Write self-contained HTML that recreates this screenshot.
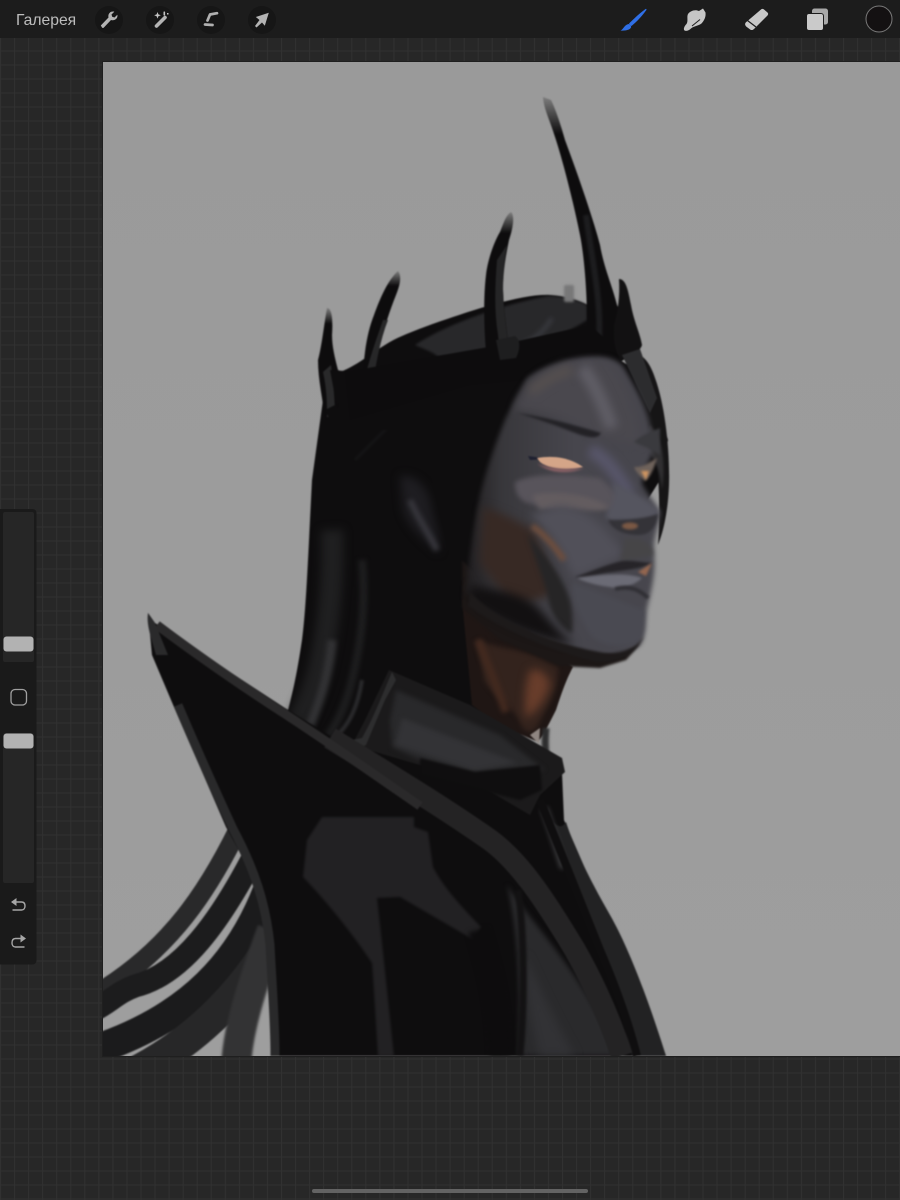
<!DOCTYPE html>
<html><head><meta charset="utf-8"><style>
html,body{margin:0;padding:0;background:#272727;width:900px;height:1200px;overflow:hidden}
svg{display:block}
</style></head><body>
<svg xmlns="http://www.w3.org/2000/svg" width="900" height="1200" viewBox="0 0 900 1200" color-interpolation-filters="sRGB">
<defs>
<pattern id="g" x="0" y="8.500" width="14.050" height="14" patternUnits="userSpaceOnUse">
<rect width="14.050" height="14" fill="#272727"/><rect x="0" y="0" width="14.050" height="1" fill="#313131"/><rect x="0" y="0" width="1" height="14" fill="#313131"/>
</pattern>
<filter id="all" filterUnits="userSpaceOnUse" x="0" y="0" width="900" height="1200" color-interpolation-filters="sRGB"><feGaussianBlur stdDeviation="0.7"/></filter>
<filter id="b1" filterUnits="userSpaceOnUse" x="0" y="0" width="900" height="1200" color-interpolation-filters="sRGB"><feGaussianBlur stdDeviation="1"/></filter>
<filter id="b2" filterUnits="userSpaceOnUse" x="0" y="0" width="900" height="1200" color-interpolation-filters="sRGB"><feGaussianBlur stdDeviation="2.500"/></filter>
<filter id="b4" filterUnits="userSpaceOnUse" x="0" y="0" width="900" height="1200" color-interpolation-filters="sRGB"><feGaussianBlur stdDeviation="4.500"/></filter>
<linearGradient id="cv" x1="0" y1="0" x2="0" y2="1"><stop offset="0" stop-color="#9a9a9a"/><stop offset="1" stop-color="#9e9e9e"/></linearGradient>
<linearGradient id="tip" x1="0" y1="0" x2="0" y2="1"><stop offset="0" stop-color="#0d0c0d" stop-opacity=".2"/><stop offset=".14" stop-color="#0d0c0d"/></linearGradient>
<linearGradient id="fc" gradientUnits="userSpaceOnUse" x1="470" y1="0" x2="575" y2="0"><stop offset="0" stop-color="#232123"/><stop offset=".3" stop-color="#38373b"/><stop offset="1" stop-color="#47464d"/></linearGradient>
<clipPath id="cc"><rect x="103" y="62" width="797" height="994"/></clipPath>
</defs>
<rect width="900" height="1200" fill="url(#g)"/>
<rect x="0" y="0" width="900" height="38" fill="#1c1c1c"/>
<rect x="102" y="61" width="798" height="996" fill="#1f1f1f"/>
<rect x="103" y="62" width="797" height="994" fill="url(#cv)"/>

<g clip-path="url(#cc)"><g filter="url(#all)">
<!-- distant hair strands -->
<g fill="none" stroke-linecap="butt">
<path d="M245 815C210 890 170 950 96 994" stroke="#29292a" stroke-width="19"/>
<path d="M262 840C220 925 180 975 135 986 118 992 110 1002 94 1010" stroke="#1c1c1d" stroke-width="23"/>
<path d="M275 870C245 965 185 1020 94 1050" stroke="#1b1b1c" stroke-width="30"/>
<path d="M280 930C240 1000 190 1045 130 1075" stroke="#272728" stroke-width="32"/>
<path d="M272 930C250 990 238 1030 236 1066" stroke="#333334" stroke-width="30" filter="url(#b1)"/>
</g>
<!-- hair back -->
<path d="M323 400L312 480C308 560 306 610 302 640 296 680 292 695 285 722L340 760 500 740 510 600 560 340 400 345Z" fill="#0e0d0e"/>
<g fill="none">
<path d="M332 530C334 580 328 630 320 665 314 690 306 705 298 722" stroke="#1f1f20" stroke-width="22" filter="url(#b4)"/>
<path d="M332 640C328 680 318 705 310 725" stroke="#323234" stroke-width="9" filter="url(#b2)"/>
<path d="M362 560C366 600 362 640 352 680 346 705 338 722 328 736" stroke="#1d1d1e" stroke-width="8" filter="url(#b2)"/>
<path d="M362 680C358 705 350 725 334 738" stroke="#2a2a2c" stroke-width="4" filter="url(#b1)"/>
<path d="M395 420C375 440 365 450 355 460" stroke="#151516" stroke-width="3" filter="url(#b1)"/>
</g>
<!-- ear -->
<path d="M400 476C418 474 430 490 432 510 436 528 442 540 438 553 425 540 410 530 403 510Z" fill="#1e1d21" filter="url(#b4)"/>
<path d="M410 500C416 515 428 532 437 550" stroke="#37363c" stroke-width="6" fill="none" filter="url(#b2)"/>
<!-- head top -->
<path d="M340 372C360 365 380 345 402 336 425 326 450 318 468 312 500 302 530 294 550 295 565 296 578 300 590 306L590 345 620 360 650 380 668 440 660 480 560 640 460 600 420 430 340 430Z" fill="#0e0d0e"/>
<path d="M415 345C445 325 500 305 548 296 565 296 578 300 587 305L587 320C560 338 530 345 510 352 480 362 455 372 440 372 448 356 430 352 415 345Z" fill="#28282a" filter="url(#b1)"/>
<path d="M520 345C535 340 545 330 552 318" stroke="#3a3b40" stroke-width="4" fill="none" filter="url(#b2)"/>
<rect x="564" y="285" width="10" height="17" fill="#777778" rx="2" filter="url(#b1)"/>
<!-- crown horns -->
<path d="M543 97L551 100C555 108 560 122 565 140 578 175 592 215 600 245 604 268 612 285 617 305L640 350 620 362 610 360 590 355 587 320C587 290 584 255 580 235 574 205 564 165 556 140 550 120 544 110 543 97Z" fill="url(#tip)"/>
<path d="M586 215C590 245 594 265 597 290 600 315 600 335 598 352" stroke="#1d1d1f" stroke-width="6" fill="none" filter="url(#b1)"/>
<path d="M619 279C626 279 628 290 631 305 634 322 640 333 642 345 640 352 632 354 620 360 615 350 613 340 614 325 618 312 620 295 619 280Z" fill="#121112"/>
<path d="M511 212C515 216 513 228 509 240 506 255 503 270 503 290 504 315 508 335 510 362L487 362C484 335 483 300 486 275 488 258 495 240 500 232 504 222 506 215 511 212Z" fill="url(#tip)"/>
<path d="M497 260C495 285 494 310 498 335L501 361 510 361C507 330 503 310 503 285 503 270 505 255 507 245Z" fill="#252526"/>
<path d="M398 271C402 276 400 285 396 295 390 310 385 325 380 345 376 358 374 370 373 377L363 377C364 350 368 330 374 315 380 298 388 280 398 271Z" fill="url(#tip)"/>
<path d="M383 320C378 335 372 350 365 377L374 377C377 358 381 338 388 320Z" fill="#272728"/>
<path d="M327 308C332 308 333 320 332 335 332 348 336 362 338 370 342 372 348 373 348 375 340 395 338 410 335 420L325 420C323 400 318 380 318 360 322 345 324 325 327 308Z" fill="url(#tip)"/>
<path d="M323 372C327 390 327 405 327 417L335 417C335 400 333 380 331 365Z" fill="#29292a"/>
<path d="M330 370L360 372 345 400 325 410 345 450Z" fill="#0e0d0e"/>
<!-- crown band -->
<path d="M345 372L500 345 590 325 612 345 620 360 605 362 560 355 525 380 470 385 350 420Z" fill="#0d0c0d"/>
<path d="M496 340L515 336C521 340 520 350 516 358L500 360Z" fill="#1e1e1f"/>
<!-- right hair side -->
<path d="M625 355C640 348 650 362 655 378 665 405 670 450 669 485 668 510 664 530 658 545 660 520 660 480 655 450 650 420 635 385 625 355Z" fill="#161516"/>
<path d="M622 355L640 349 657 398 650 413Z" fill="#2c2c2e"/>
<path d="M650 425C665 440 665 470 662 490 660 470 655 455 640 445Z" fill="#302f31" filter="url(#b1)"/>

<!-- under-jaw dark / neck -->
<path d="M462 600L500 625 573 667C566 680 562 692 556 710 550 722 545 732 538 742L500 725 472 705Z" fill="#1f1614"/>
<path d="M477 640C490 645 505 648 515 650 535 655 550 662 558 668 560 685 548 705 540 722 532 738 522 732 518 718 505 700 490 692 484 680Z" fill="#33231d" filter="url(#b2)"/>
<path d="M530 670C540 668 548 674 550 685 545 702 534 714 526 718 523 700 526 682 530 670Z" fill="#683d2b" filter="url(#b4)"/>
<path d="M478 640C486 660 496 685 506 712" stroke="#42291f" stroke-width="8" fill="none" filter="url(#b2)"/>
<path d="M546 728C544 745 546 760 549 778" stroke="#2d2d2e" stroke-width="7" fill="none" filter="url(#b1)"/>
<path d="M530 735L540 728 539 744Z" fill="#8f8681"/>
<!-- dark shadow under face -->
<path d="M462 560L540 640 600 654 640 644 626 660 600 668 560 666 500 640 462 608Z" fill="#1c1716" filter="url(#b1)"/>

<!-- FACE -->
<path d="M527 378C545 365 575 356 600 357 612 358 620 362 624 368 640 395 655 420 652 455 645 470 642 478 642 484 650 498 658 505 660 515 658 530 652 540 654 555 656 570 652 590 646 612 644 625 646 635 640 645 625 655 600 660 578 652 550 642 510 630 480 610L466 590C470 550 474 525 478 505 484 475 495 445 505 420 512 405 520 390 527 378Z" fill="url(#fc)" filter="url(#b2)"/>
<!-- forehead -->
<path d="M540 375C565 360 590 358 610 362 625 380 640 415 640 445 620 440 600 440 590 430 565 415 530 410 515 410 520 395 530 385 540 375Z" fill="#4a484e" filter="url(#b4)"/>
<path d="M582 368C592 380 602 400 612 428" stroke="#605e66" stroke-width="13" fill="none" filter="url(#b4)"/>
<path d="M530 392C545 380 560 372 572 370" stroke="#56504f" stroke-width="9" fill="none" filter="url(#b4)"/>
<!-- eye socket -->
<path d="M515 482C535 472 570 475 600 478 620 495 630 505 612 510 590 500 565 510 535 505 520 502 515 495 515 482Z" fill="#58545b" filter="url(#b2)"/>
<path d="M532 495C560 490 590 495 612 508 590 515 570 505 540 510Z" fill="#645d60" filter="url(#b2)"/>
<path d="M590 450C610 460 620 480 630 495" stroke="#58566a" stroke-width="13" fill="none" filter="url(#b4)"/>
<!-- nose -->
<path d="M612 482C630 490 650 500 660 512 650 525 640 525 625 522 612 522 606 520 606 515 610 505 618 500 612 482Z" fill="#55555f" filter="url(#b2)"/>
<path d="M608 520C618 520 640 520 658 514 656 528 650 535 638 535 625 535 612 530 608 520Z" fill="#343338" filter="url(#b1)"/>
<ellipse cx="630" cy="526" rx="8" ry="3.500" fill="#7a5844" filter="url(#b1)"/>
<!-- lower face -->
<path d="M560 505C585 510 600 520 625 555L575 578C565 560 550 530 530 515Z" fill="#515059" filter="url(#b4)"/>
<path d="M625 538C640 538 650 540 654 555L620 562Z" fill="#464547" filter="url(#b2)"/>
<!-- cheek brown -->
<path d="M483 507C500 512 520 522 533 530 545 555 552 580 557 593L513 607 480 563Z" fill="#372924" filter="url(#b4)"/>
<path d="M532 526C545 535 556 548 564 560" stroke="#6f4e3d" stroke-width="6" fill="none" filter="url(#b2)"/>
<path d="M527 533C545 555 562 575 570 600 573 612 573 625 572 634 555 625 548 605 547 593 540 570 532 550 527 533Z" fill="#262526" filter="url(#b2)"/>
<path d="M470 585C490 590 515 590 535 605 550 620 560 635 575 645 540 640 500 625 470 600Z" fill="#121011" filter="url(#b4)"/>
<!-- chin -->
<path d="M572 582C600 592 630 605 645 610 645 625 645 635 638 643 620 650 600 645 590 635 578 615 572 600 572 582Z" fill="#4a4a52" filter="url(#b2)"/>
<path d="M470 592C500 625 560 645 600 652 620 656 635 650 644 636 636 654 618 664 596 662 560 654 510 634 468 606Z" fill="#1d1a1a" filter="url(#b1)"/>
<!-- mouth -->
<path d="M575 577C590 572 605 565 622 561 630 560 640 562 652 563 640 570 620 570 600 574 590 576 580 578 575 577Z" fill="#262428" filter="url(#b1)"/>
<path d="M577 578C600 575 625 572 642 578 635 585 620 590 610 587 595 585 585 582 577 578Z" fill="#6b6b75" filter="url(#b1)"/>
<path d="M615 589C630 585 640 590 648 598" stroke="#302f34" stroke-width="4" fill="none" filter="url(#b1)"/>
<path d="M638 572L652 563 646 576Z" fill="#94664f" filter="url(#b1)"/>
<!-- brows -->
<path d="M517 413C545 417 575 425 601 433 598 439 590 438 578 434 555 425 535 418 517 413Z" fill="#232226" filter="url(#b1)"/>
<path d="M634 442C642 435 650 432 660 428L660 455C650 448 642 446 634 442Z" fill="#3a3a3e" filter="url(#b1)"/>
<!-- eyes -->
<path d="M528 456L542 458 548 459 530 460Z" fill="#1e2030"/>
<path d="M537 458C555 455 570 458 583 467 570 470 550 470 540 462Z" fill="#d4a588"/>
<path d="M537 463C550 470 570 470 584 468 570 474 550 474 537 463Z" fill="#96666a" filter="url(#b1)"/>
<path d="M634 467C642 468 650 462 657 458 654 470 648 480 645 481 640 476 636 472 634 467Z" fill="#6e625b" filter="url(#b1)"/>
<path d="M641 471L646 480 649 471Z" fill="#cf9560" filter="url(#b1)"/>

<!-- BODY -->
<path d="M148 613L155 623 285 708 345 745 500 760 562 773 564 820 590 880 618 935 640 985 666 1056 274 1056 266 900 226 827 174 707 152 655Z" fill="#0e0d0e"/>
<!-- inner collar -->
<path d="M389 670L470 705 562 758 565 772 540 795 530 815 470 780 352 745 365 720Z" fill="#1b1a1b"/>
<path d="M392 672C382 695 375 715 362 738L352 740 354 750 366 745 385 700 396 680Z" fill="#2d2d2e"/>
<path d="M396 690L500 735 545 770 474 772 420 760 392 747 390 720Z" fill="#29292b" filter="url(#b2)"/>
<path d="M402 718L518 763 474 771 395 745Z" fill="#333336" filter="url(#b2)"/>
<path d="M420 758L475 772 540 765 542 790 520 800 420 775Z" fill="#0f0e0f" filter="url(#b1)"/>
<!-- right side of body -->
<path d="M507 885C530 920 560 950 590 1000 605 1025 612 1045 616 1056L518 1056C520 1000 520 940 507 885Z" fill="#2a2a2c" filter="url(#b2)"/>
<path d="M525 955C540 990 560 1030 575 1056L540 1056C530 1020 525 990 525 955Z" fill="#323235" filter="url(#b4)"/>
<path d="M540 800C548 815 558 835 566 822 575 850 590 880 610 915 630 950 650 1005 666 1056L632 1056C620 1000 600 950 580 900 560 860 550 820 540 800Z" fill="#222223"/>
<path d="M544 808C552 830 558 850 564 868" stroke="#39393b" stroke-width="8" fill="none" filter="url(#b2)"/>
<path d="M540 800C560 850 580 900 600 950 615 985 628 1020 637 1056" stroke="#0f0e0f" stroke-width="8" fill="none"/>
<!-- lapel band -->
<path d="M330 738C390 775 440 805 490 840 520 862 545 900 575 950 595 985 610 1020 622 1056" stroke="#242324" stroke-width="22" fill="none"/>
<path d="M518 890C524 930 525 1000 520 1056" stroke="#131213" stroke-width="7" fill="none" filter="url(#b1)"/>
<!-- collar edges -->
<path d="M157 625C190 650 240 685 285 714 325 740 365 768 420 806" stroke="#2a292a" stroke-width="9" fill="none"/>
<path d="M148 613L155 623 168 655 156 655C152 640 146 625 148 613Z" fill="#2a2a2b"/>
<path d="M178 705C195 745 215 790 233 829 255 870 266 905 270 945 272 985 275 1020 275 1056" stroke="#29292a" stroke-width="9" fill="none"/>
<!-- chest patch -->
<path d="M322 817L414 817 414 827 428 832 433 867C445 890 465 910 481 927L474 940 400 897 377 898C382 940 388 1000 394 1056L378 1056C376 1025 374 990 372 963 350 930 325 900 303 877L307 840Z" fill="#222123" filter="url(#b1)"/>
<path d="M478 930C486 960 498 990 500 1056" stroke="#0d0c0d" stroke-width="20" fill="none" filter="url(#b2)"/>
</g></g>

<!-- top bar -->
<text x="16" y="25" font-family="'Liberation Sans','Noto Sans CJK SC',sans-serif" font-size="15.700" fill="#bdbdbd">Галерея</text>
<g fill="#161616"><circle cx="109" cy="20" r="14"/><circle cx="160" cy="20" r="14"/><circle cx="211" cy="20" r="14"/><circle cx="262" cy="20" r="14"/></g>
<!-- wrench -->
<path d="M102 27.500L100.800 25.500 108.500 17.500C108 15 109 12.800 111.200 11.800 112.300 11.400 113.500 11.400 114.300 11.700L111.500 14.500 112.200 16.800 114.500 17.500 117.300 14.700C117.700 16 117.400 17.500 116.300 18.800 114.800 20.300 112.800 20.600 111 20L103.800 27.600C103.200 28.200 102.500 28 102 27.500Z" fill="#b4b4b4"/>
<!-- wand -->
<path d="M156.500 26L165 17.500" stroke="#b4b4b4" stroke-width="3.600" stroke-linecap="round"/>
<g fill="#c4c4c4"><path d="M157.500 12l.9 2.400 2.400.9-2.400.9-.9 2.400-.9-2.400-2.400-.9 2.400-.9z"/><rect x="163.500" y="11.500" width="1.600" height="4" rx=".6"/><rect x="167" y="13" width="1.500" height="1.500"/></g>
<!-- S -->
<path d="M217 13.200L210 14.500 207.500 20.500M205 24.500L212.500 25" stroke="#b0b0b0" stroke-width="2.700" fill="none" stroke-linecap="round" stroke-linejoin="round"/>
<!-- arrow -->
<path d="M268.800 12.800L255.800 17 259.500 20 255 26 256.500 27.500 262 22.500 264.800 25.800Z" fill="#b4b4b4"/>
<!-- brush -->
<path d="M645.500 9C646.500 8.500 646.800 9.300 646.200 10.200 642 16 637 21.500 631.500 26 630.500 25.500 629.500 24.500 629 23.500 634 18.500 640 13 645.500 9Z" fill="#2f6fe6"/>
<path d="M628.500 24C630 24.300 631 25.300 631.200 27 630.500 29.500 626.500 31 620.500 30.500 623.500 29.500 623.500 25.500 628.500 24Z" fill="#2f6fe6"/>
<!-- smudge -->
<path d="M688 14C690 11 695 9 699 11L703 8.500 705.500 12.500C706 17 704.500 20 701.500 23.500 698 26 694 26 691 28.500 689 30.500 686 31.500 684.500 30.500 683 29 684.500 26 686.500 24 688.500 21 686.500 17 688 14Z" fill="#c6c6c6"/>
<path d="M692 26L700 19.500" stroke="#1c1c1c" stroke-width="1"/>
<!-- eraser -->
<path d="M761 9.500C762 8.700 763 8.800 764 9.500L767.500 12.500C768.500 13.500 768.300 14.500 767.500 15.500L754 29C753 30 751.800 30.300 750.500 29.700L746.800 27C745 25.500 744.500 23.700 746 22.200Z" fill="#c8c8c8"/>
<path d="M747.500 20.500L756 27" stroke="#1c1c1c" stroke-width="1.200"/>
<!-- layers -->
<rect x="812" y="8.500" width="16" height="16" rx="2.500" fill="#a8a8a8"/>
<rect x="806.500" y="13.500" width="17" height="17" rx="2.500" fill="#cacaca" stroke="#1c1c1c" stroke-width="1"/>
<!-- color -->
<circle cx="879" cy="19" r="13" fill="#141112" stroke="#7a7a7a" stroke-width="1"/>

<!-- sidebar -->
<rect x="-6" y="509" width="42.500" height="455.500" rx="4" fill="#1a1a1a"/>
<rect x="3" y="512" width="31" height="150" rx="2" fill="#262626"/>
<rect x="3" y="733" width="31" height="150" rx="2" fill="#262626"/>
<rect x="3.500" y="636.500" width="30" height="15" rx="3" fill="#b2b2b2"/>
<rect x="3.500" y="733.500" width="30" height="15" rx="3" fill="#b2b2b2"/>
<rect x="11" y="689.500" width="15.500" height="15.500" rx="4" fill="none" stroke="#a0a0a0" stroke-width="1.300"/>
<path d="M12 902H21.500C24.500 902 25 904 25 906 25 908 24 910 21.500 910H12.500" fill="none" stroke="#a6a6a6" stroke-width="1.400"/>
<path d="M11 902L16.500 898V906Z" fill="#a6a6a6"/>
<path d="M25 938.500H15.500C12.500 938.500 12 941 12 943 12 945 13 947 15.500 947H24.500" fill="none" stroke="#a6a6a6" stroke-width="1.400"/>
<path d="M26 938.500L20.500 934.500V942.500Z" fill="#a6a6a6"/>

<!-- home indicator -->
<rect x="312" y="1189" width="276" height="4" rx="2" fill="#636363"/>
</svg>
</body></html>
